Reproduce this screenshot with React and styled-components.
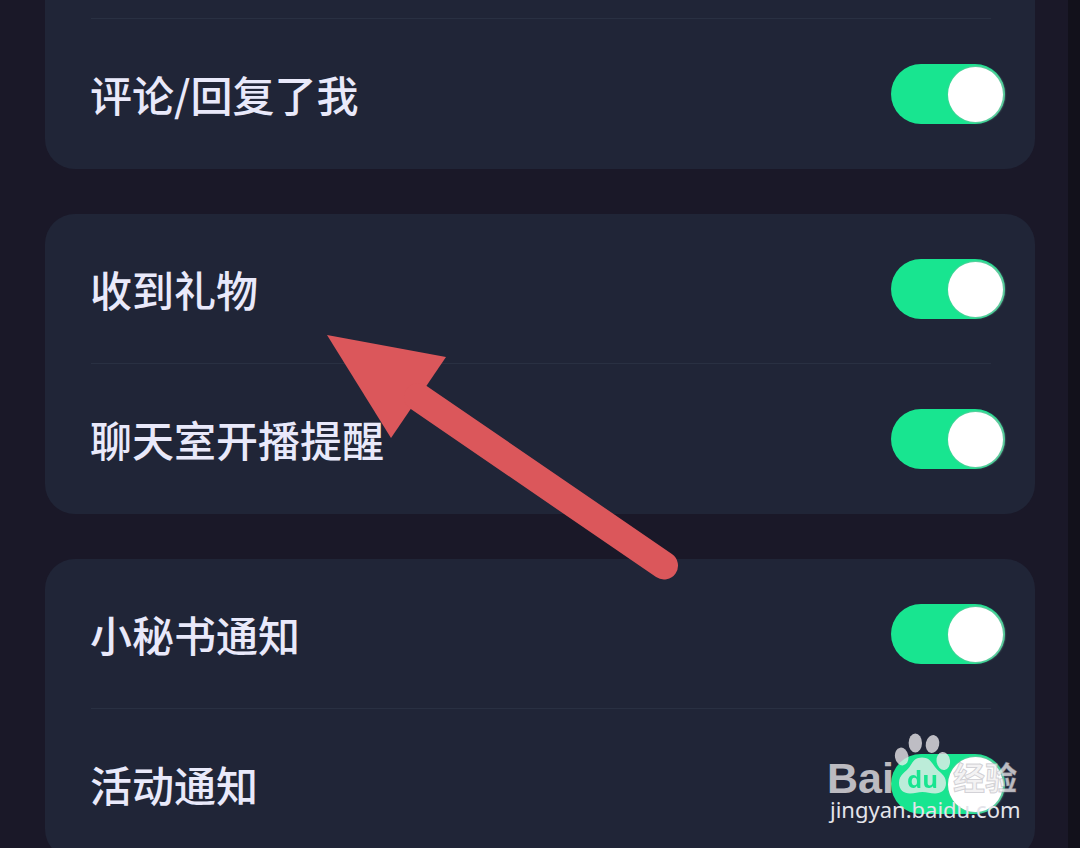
import React, { useState } from "react";
import styled, { createGlobalStyle } from "styled-components";

const groups = [
  {
    continued: true,
    items: [{ id: "comment", label: "评论/回复了我" }],
  },
  {
    items: [
      { id: "gift", label: "收到礼物" },
      { id: "live", label: "聊天室开播提醒" },
    ],
  },
  {
    items: [
      { id: "secretary", label: "小秘书通知" },
      { id: "activity", label: "活动通知" },
    ],
  },
];

const Setting = ({ id, label }) => {
  const [on, setOn] = useState(true);

  return (
    <Row>
      <Label htmlFor={id}>{label}</Label>
      <Switch
        id={id}
        type="checkbox"
        checked={on}
        onChange={() => setOn(!on)}
      />
    </Row>
  );
};

const Pointer = () => (
  <PointerSvg width="352" height="246" viewBox="0 0 352 246" aria-hidden="true">
    <path d="M0 0 119 22 64 103Z" />
    <path className="shaft" d="M91 62 337 230.5" />
  </PointerSvg>
);

const Watermark = () => (
  <WatermarkSvg width="200" height="100" viewBox="15 8 200 100" aria-hidden="true">
    <mask id="paw" maskUnits="userSpaceOnUse" x="80" y="8" width="64" height="72">
      <path
        fill="#fff"
        d="M112 37.5C105 37.5 102.5 42 99.5 47 96 52 89 54.5 89 63 89 70 94 73.5 100 73.500 105 73.5 108 72 112.5 72 117 72 120 73.5 125 73.5 131 73.5 136 70 136 63 136 54.5 128.500 52 125 47 121.5 42 119 37.5 112 37.5Z"
      />
      <text className="du" x="97" y="68">
        du
      </text>
    </mask>
    <g className="logo">
      <text className="bai" x="17" y="73">
        Bai
      </text>
      <ellipse cx="91.7" cy="36.5" rx="6.7" ry="9" transform="rotate(-10 91.7 36.5)" />
      <ellipse cx="105.3" cy="23" rx="6.7" ry="9.5" />
      <ellipse cx="122.5" cy="24" rx="6.7" ry="9" transform="rotate(12 122.5 24)" />
      <ellipse cx="133.3" cy="41" rx="6.7" ry="9" transform="rotate(-8 133.3 41)" />
      <rect x="80" y="8" width="64" height="72" mask="url(#paw)" />
      <text className="jingyan" x="143" y="70">
        经验
      </text>
    </g>
    <text className="site" x="20" y="98">
      jingyan.baidu.com
    </text>
  </WatermarkSvg>
);

const App = () => {
  return (
    <Page>
      <GlobalStyle />
      {groups.map((group) => (
        <Card key={group.items[0].id} $continued={group.continued}>
          {group.continued && <Remainder />}
          {group.items.map((item) => (
            <Setting key={item.id} {...item} />
          ))}
        </Card>
      ))}
      <Pointer />
      <Watermark />
    </Page>
  );
};

export default App;

const GlobalStyle = createGlobalStyle`
  body {
    margin: 0;
    background-color: #1a1828;
  }
`;

const Page = styled.main`
  position: relative;
  box-sizing: border-box;
  display: flex;
  flex-direction: column;
  gap: 45px;
  height: 100vh;
  padding: 0 33px 0 45px;
  border-right: 12px solid #12111b;
  overflow: hidden;
  background-color: #1a1828;
  color: #e9e9fa;
  font-family: "Noto Sans CJK SC", sans-serif;
`;

const Card = styled.section`
  flex-shrink: 0;
  border-radius: ${(props) => (props.$continued ? "0 0 30px 30px" : "30px")};
  background-color: #202537;
`;

const Divider = styled.div`
  position: relative;

  & + &::before {
    content: "";
    position: absolute;
    top: -1px;
    left: 46px;
    right: 44px;
    height: 1px;
    background-color: #293042;
  }
`;

const Remainder = styled(Divider)`
  height: 19px;
`;

const Row = styled(Divider)`
  display: flex;
  align-items: center;
  justify-content: space-between;
  height: 150px;
  padding: 0 30px 0 45px;
`;

const Label = styled.label`
  font-size: 42px;
  font-weight: 500;
  line-height: 60px;
`;

const Switch = styled.input`
  appearance: none;
  display: flex;
  align-items: center;
  justify-content: ${(props) => (props.checked ? "flex-end" : "flex-start")};
  box-sizing: border-box;
  width: 114px;
  height: 60px;
  margin: 0;
  padding: 0 2px;
  border-radius: 30px;
  background-color: ${(props) => (props.checked ? "#18e590" : "#3a4054")};
  cursor: pointer;

  &::before {
    content: "";
    width: 55px;
    height: 55px;
    border-radius: 50%;
    background-color: #fff;
    box-shadow: 1px 0 2px 1px rgba(130, 190, 165, 0.8);
  }
`;

const PointerSvg = styled.svg`
  position: absolute;
  top: 335px;
  left: 327px;
  fill: #db575b;
  pointer-events: none;

  .shaft {
    stroke: #db575b;
    stroke-width: 28px;
    stroke-linecap: round;
  }
`;

const WatermarkSvg = styled.svg`
  position: absolute;
  right: 43px;
  bottom: 20px;
  pointer-events: none;

  .logo {
    fill: rgba(240, 238, 240, 0.76);
  }

  .bai {
    font: bold 43px "Liberation Sans", sans-serif;
  }

  .du {
    fill: #000;
    font: bold 24px "Open Sans", sans-serif;
  }

  .jingyan {
    font: bold 32px "Noto Sans CJK SC", sans-serif;
    stroke: rgba(150, 150, 160, 0.4);
    stroke-width: 1px;
  }

  .site {
    fill: #e4e4ea;
    font: 22px "Noto Sans", sans-serif;
  }
`;
